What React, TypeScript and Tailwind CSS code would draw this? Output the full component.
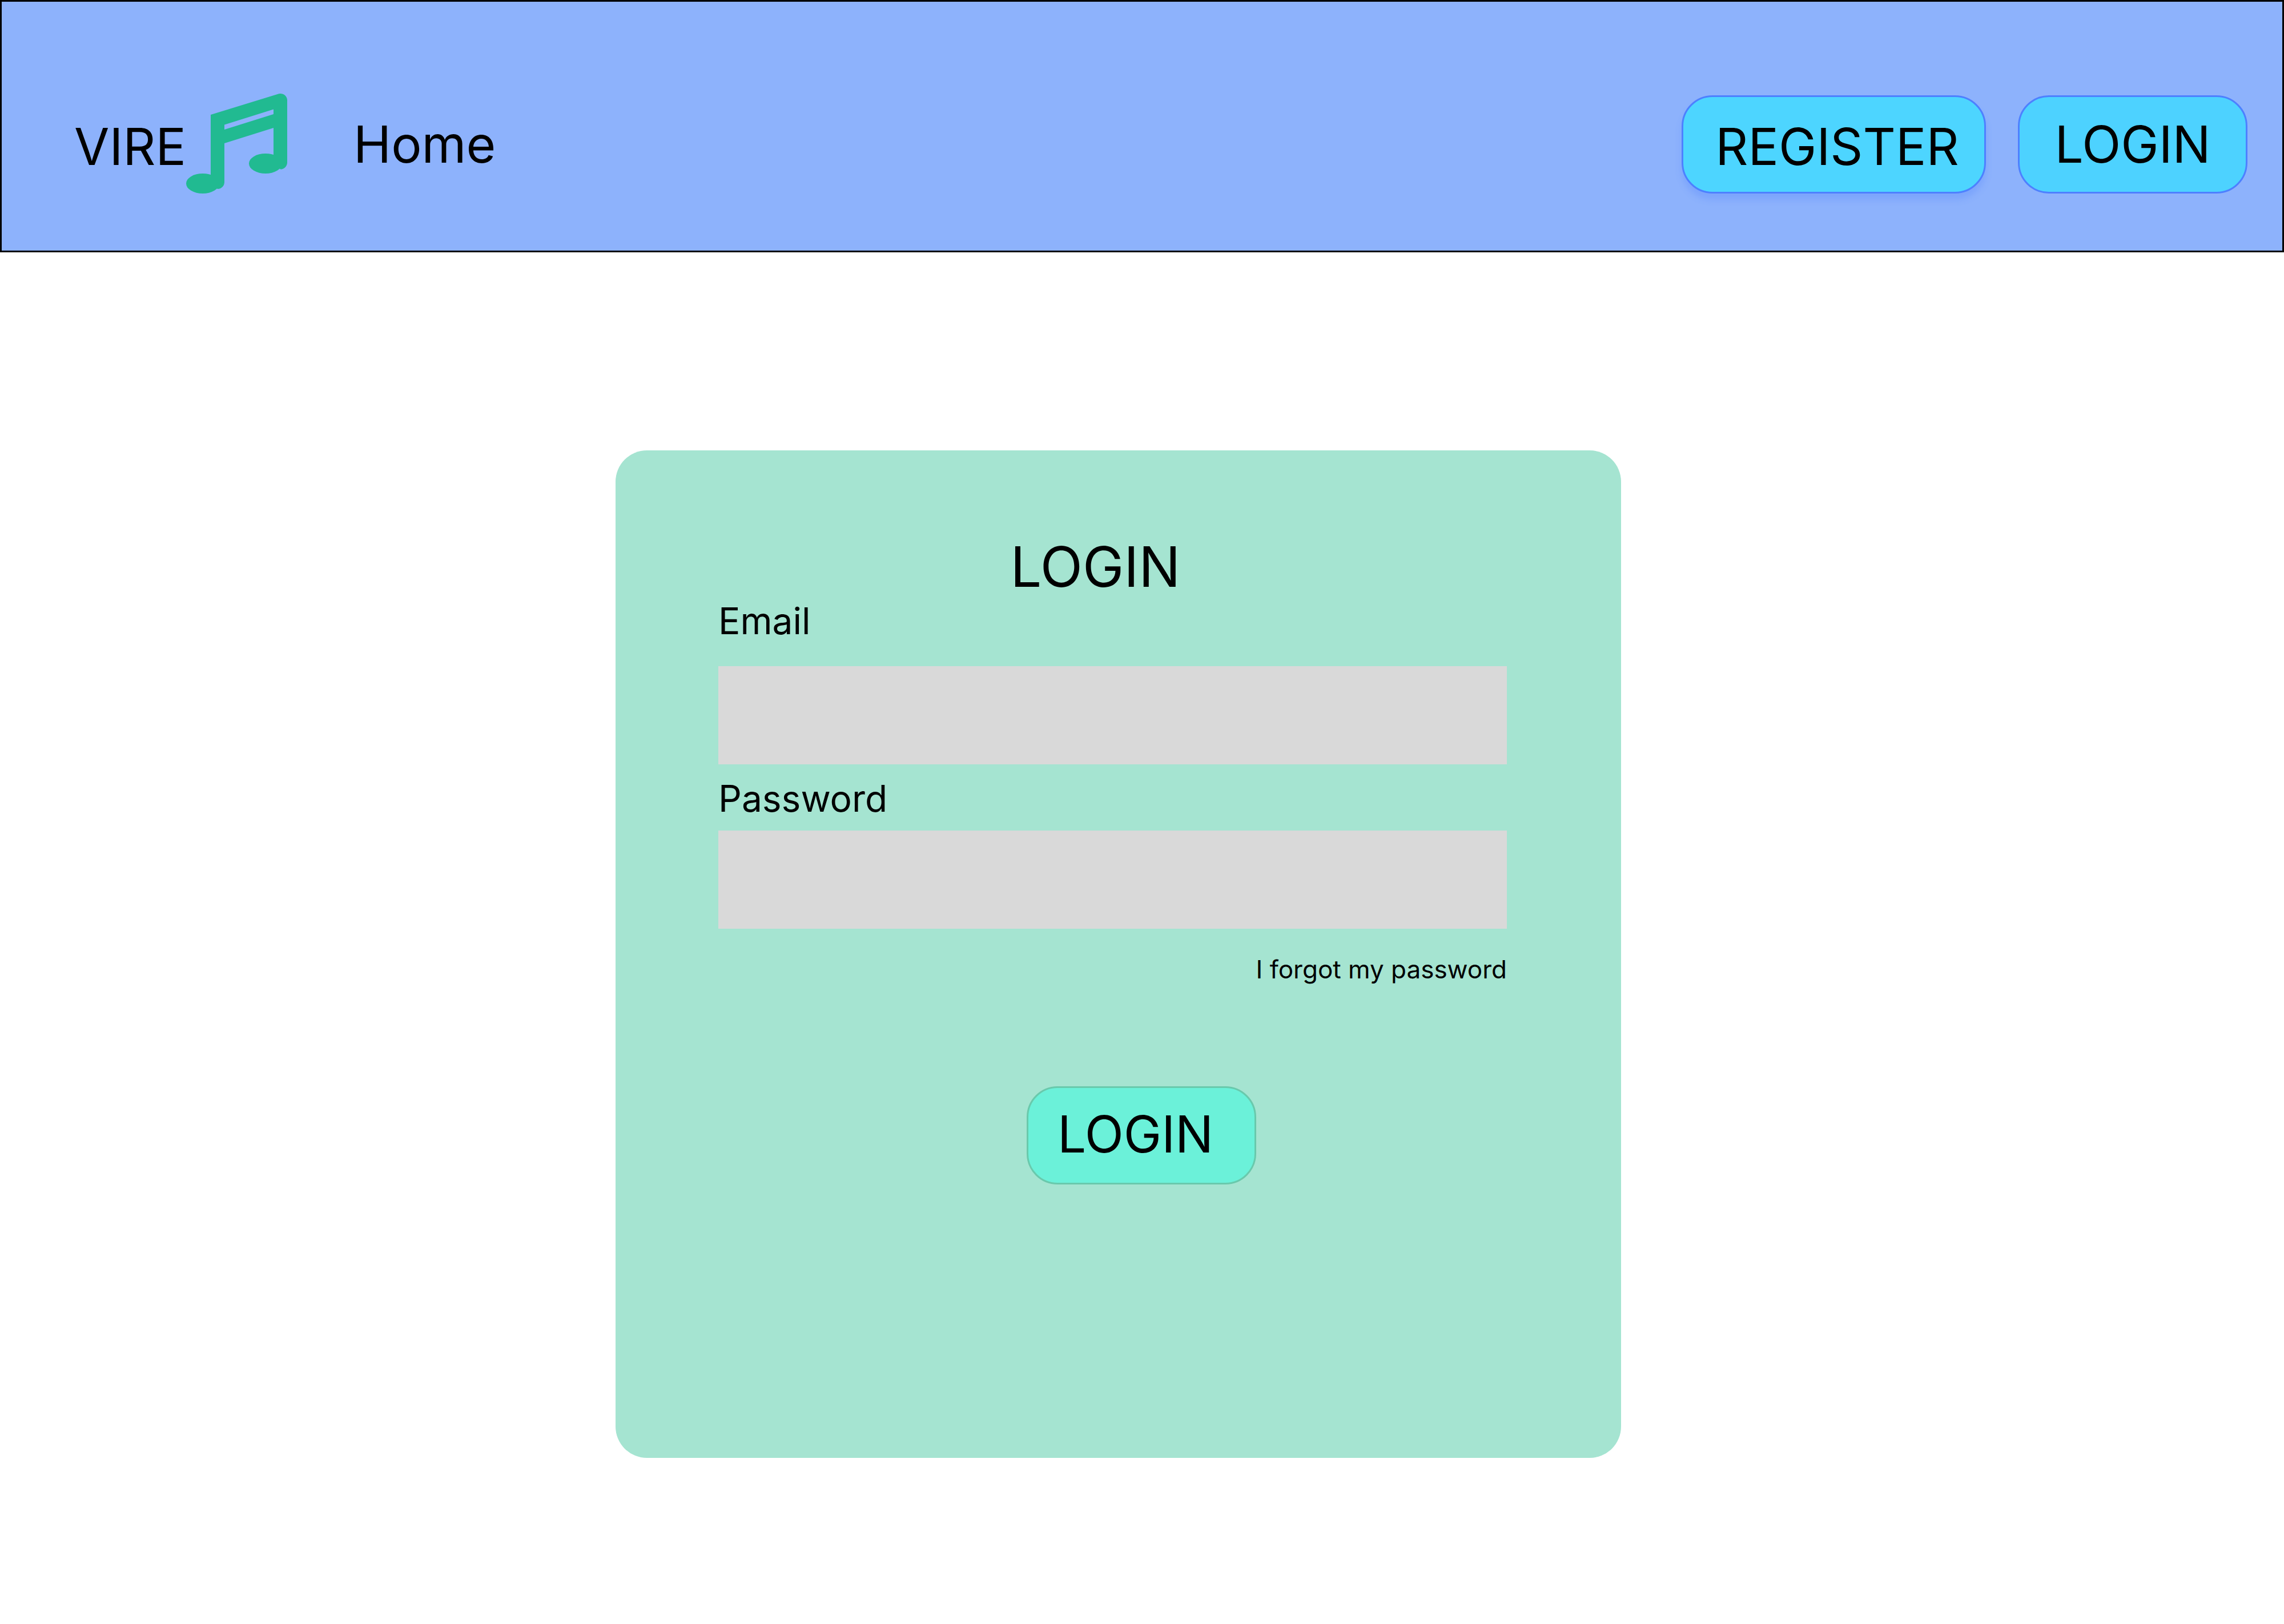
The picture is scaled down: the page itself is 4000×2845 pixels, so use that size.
function MusicNote() {
  return (
    <svg viewBox="0 0 177 180" className="h-[180px] w-[177px] shrink-0" fill="#21ba91" aria-hidden="true">
      <path
        fillRule="evenodd"
        d="M43 38 L160 2 A12 12 0 0 1 177 12 V122 A12 12 0 0 1 165 133.500 L153 122 V61 L67 88 V156 A12 12 0 0 1 55 168 L43 158 Z M67 55.500 L153 28.500 V37 L67 64 Z"
      />
      <ellipse cx="29" cy="158.500" rx="29" ry="17.500" />
      <ellipse cx="139" cy="123.500" rx="29" ry="17.500" />
    </svg>
  );
}

export default function App() {
  return (
    <div className="min-h-screen bg-white font-['Inter',sans-serif] text-black [font-optical-sizing:none]">
      <header className="flex items-center justify-between border-[3px] border-black bg-[#8db2fc] pt-[164px] pr-[61px] pb-[100px] pl-[127px] text-[89px] leading-[108px]">
        <div className="flex h-[172px] items-center">
          <a href="#" className="flex items-center">
            <span className="pt-2">VIRE</span>
            <MusicNote />
          </a>
          <nav className="ml-[116px]">
            <a href="#">Home</a>
          </nav>
        </div>
        <div className="flex gap-14">
          <button
            type="button"
            className="h-[172px] w-[533px] rounded-[54px] border-[3px] border-[#4d80ff] bg-[#4dd5ff] pt-2 pl-3 shadow-[0_11px_11px_rgba(77,128,255,0.25)]"
          >
            REGISTER
          </button>
          <button
            type="button"
            className="h-[172px] w-[402px] rounded-[54px] border-[3px] border-[#4d80ff] bg-[#4dd2ff]"
          >
            LOGIN
          </button>
        </div>
      </header>

      <main className="grid grid-cols-[1078fr_1761fr_1161fr] pt-[347px] pb-[291px]">
        <form
          className="col-start-2 flex flex-col rounded-[55px] bg-[#a5e4d1] pt-[145px] pr-[200px] pb-[479px] pl-[180px]"
          onSubmit={(e) => e.preventDefault()}
        >
          <h1 className="pr-[60px] text-center text-[97px] leading-[118px]">LOGIN</h1>
          <label htmlFor="email" className="text-[64px] leading-[72px]">
            Email
          </label>
          <input id="email" type="email" className="mt-[43px] h-[172px] w-full bg-[#d9d9d9] px-8 text-[64px]" />
          <label htmlFor="password" className="mt-6 text-[64px] leading-[72px]">
            Password
          </label>
          <input id="password" type="password" className="mt-5 h-[172px] w-full bg-[#d9d9d9] px-8 text-[64px]" />
          <a href="#" className="mt-11 self-end text-[44px] leading-[54px]">
            I forgot my password
          </a>
          <div className="mt-[178px] flex justify-center pl-[100px]">
            <button
              type="submit"
              className="h-[172px] w-[402px] rounded-[54px] border-[3px] border-[#69c9ac] bg-[#6bf1d9] pr-5 pb-1 text-[89px] leading-[108px]"
            >
              LOGIN
            </button>
          </div>
        </form>
      </main>
    </div>
  );
}
